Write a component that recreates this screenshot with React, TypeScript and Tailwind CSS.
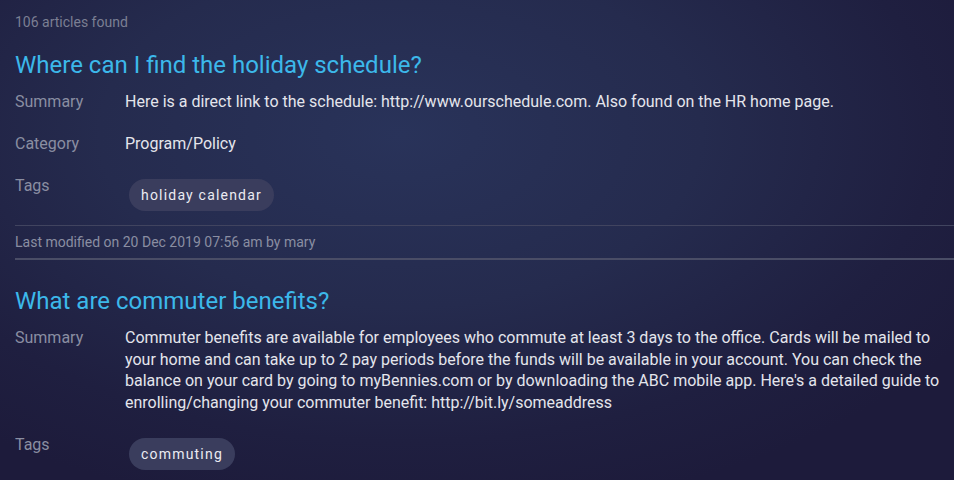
const articles = [
  {
    title: "Where can I find the holiday schedule?",
    summary:
      "Here is a direct link to the schedule: http://www.ourschedule.com. Also found on the HR home page.",
    category: "Program/Policy",
    tags: ["holiday calendar"],
    modified: "Last modified on 20 Dec 2019 07:56 am by mary",
  },
  {
    title: "What are commuter benefits?",
    summary:
      "Commuter benefits are available for employees who commute at least 3 days to the office. Cards will be mailed to your home and can take up to 2 pay periods before the funds will be available in your account. You can check the balance on your card by going to myBennies.com or by downloading the ABC mobile app. Here's a detailed guide to enrolling/changing your commuter benefit: http://bit.ly/someaddress",
    tags: ["commuting"],
  },
];

type Article = (typeof articles)[number] & { category?: string; modified?: string };

function Row({ label, children }: { label: string; children: React.ReactNode }) {
  return (
    <div className="flex pr-[8px]">
      <div className="w-[110px] shrink-0 text-base leading-[22px] text-[#8a8ea2]">{label}</div>
      <div className="flex-1 text-base leading-[21.7px] text-[#e4e5ec]">{children}</div>
    </div>
  );
}

function ArticleItem({ a }: { a: Article }) {
  return (
    <div>
      <div className="pl-[15px]">
        <h2 className="text-2xl leading-[28px] text-[#3cb8ea] font-normal mb-3">{a.title}</h2>
        <div className="flex flex-col gap-5">
          <Row label="Summary">{a.summary}</Row>
          {a.category && <Row label="Category">{a.category}</Row>}
          <Row label="Tags">
            <div className="flex gap-2 pt-1">
              {a.tags.map((t) => (
                <span
                  key={t}
                  className="ml-1 h-8 px-3 rounded-full bg-[#3a3d5d] text-sm leading-8 tracking-[1.2px] text-[#ebebf2]"
                >
                  {t}
                </span>
              ))}
            </div>
          </Row>
        </div>
      </div>
      {a.modified && (
        <div className="ml-[15px] mt-[14px] border-t border-[#41445f] pt-[7px] pb-[6px] border-b-2 border-b-[#4a4d66]">
          <div className="text-sm leading-[19px] text-[#8a8ea2]">{a.modified}</div>
        </div>
      )}
    </div>
  );
}

export default function App() {
  return (
    <div
      className="w-[954px] h-[480px] overflow-hidden bg-[radial-gradient(ellipse_70%_80%_at_42%_28%,#29335a_0%,#252b4e_45%,#1f1f40_80%,#1d1b3b_100%)]"
      style={{ fontFamily: "Roboto, 'Noto Sans', sans-serif" }}
    >
      <div className="pl-[15px] pt-3 text-sm leading-[20px] text-[#7b7f93]">106 articles found</div>
      <div className="mt-[19px] flex flex-col gap-[27px]">
        {articles.map((a, i) => (
          <ArticleItem key={i} a={a} />
        ))}
      </div>
    </div>
  );
}
